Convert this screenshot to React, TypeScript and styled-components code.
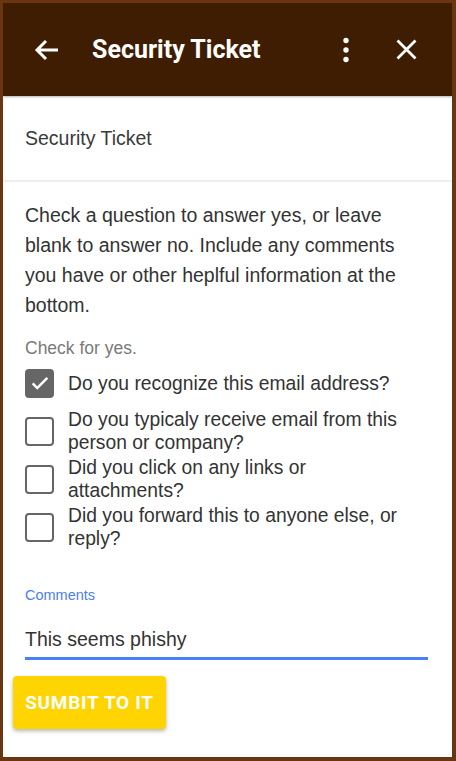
import React from "react";
import styled, { createGlobalStyle } from "styled-components";

const Global = createGlobalStyle`
  html, body { margin: 0; padding: 0; background: #6b3510; }
  body { font-family: "Liberation Sans", Arial, sans-serif; }
`;

const Frame = styled.div`
  width: 456px;
  height: 761px;
  box-sizing: border-box;
  border-style: solid;
  border-color: #6b3510;
  border-width: 3px 4px 4px 3px;
  display: flex;
  flex-direction: column;
  background: #fff;
  overflow: hidden;
`;

const Header = styled.header`
  height: 93px;
  flex: none;
  background: #3f1d02;
  display: flex;
  align-items: center;
  color: #fff;
  box-shadow: 0 1px 2px rgba(0,0,0,0.3);
`;

const IconBtn = styled.div<{ $w: number; $ml: number }>`
  width: ${(p) => p.$w}px;
  margin-left: ${(p) => p.$ml}px;
  display: flex;
  align-items: center;
  justify-content: center;
`;

const Title = styled.h1`
  margin: 0 0 0 32px;
  font-family: Roboto, "Liberation Sans", sans-serif;
  font-weight: 700;
  font-size: 25px;
  flex: 1;
`;

const SubHeader = styled.div`
  height: 84px;
  padding-left: 22px;
  display: flex;
  align-items: center;
  font-size: 19.5px;
  color: #3a3a3a;
  border-bottom: 2px solid #eeeeee;
  flex: none;
`;

const Body = styled.div`
  padding: 18px 24px 0 22px;
  display: flex;
  flex-direction: column;
`;

const Intro = styled.p`
  margin: 0;
  font-size: 19.5px;
  line-height: 30px;
  color: #333;
`;

const Hint = styled.div`
  margin-top: 18px;
  font-size: 17.5px;
  line-height: 21px;
  color: #7a7a7a;
`;

const List = styled.div`
  display: flex;
  flex-direction: column;
`;

const Row = styled.label`
  display: flex;
  align-items: center;
  height: 48px;
`;

const Box = styled.span<{ $on: boolean }>`
  width: 29px;
  height: 29px;
  box-sizing: border-box;
  border: 2px solid #666;
  border-radius: 4px;
  background: ${(p) => (p.$on ? "#666" : "#fff")};
  display: flex;
  align-items: center;
  justify-content: center;
  flex: none;
`;

const Question = styled.span`
  margin-left: 14px;
  font-size: 19.3px;
  line-height: 23px;
  color: #333;
  max-width: 345px;
`;

const Field = styled.div`
  margin-top: 36px;
  display: flex;
  flex-direction: column;
`;

const FieldLabel = styled.div`
  font-size: 14.5px;
  line-height: 17px;
  color: #4a80f5;
`;

const FieldValue = styled.div`
  margin-top: 23px;
  font-size: 19.5px;
  line-height: 24px;
  color: #333;
  padding-bottom: 6px;
  border-bottom: 3px solid #4a80f5;
`;

const Submit = styled.button`
  margin-top: 16px;
  margin-left: -12px;
  align-self: flex-start;
  width: 153px;
  height: 53px;
  border: none;
  border-radius: 4px;
  background: #ffd400;
  color: #fff;
  font-family: Roboto, "Liberation Sans", sans-serif;
  font-weight: 700;
  font-size: 19px;
  letter-spacing: 0.7px;
  box-shadow: 0 2px 4px rgba(0,0,0,0.3);
  padding: 0;
`;

const questions = [
  { text: "Do you recognize this email address?", on: true },
  { text: "Do you typicaly receive email from this person or company?", on: false },
  { text: "Did you click on any links or attachments?", on: false },
  { text: "Did you forward this to anyone else, or reply?", on: false },
];

export default function App() {
  return (
    <>
      <Global />
      <Frame>
        <Header>
          <IconBtn $w={26} $ml={31}>
            <svg width="26" height="24" viewBox="0 0 26 24">
              <path d="M24 12H4M12 3L3 12L12 21" stroke="#fff" strokeWidth="3" fill="none" />
            </svg>
          </IconBtn>
          <Title>Security Ticket</Title>
          <IconBtn $w={24} $ml={0}>
            <svg width="24" height="26" viewBox="0 0 24 26">
              <circle cx="12" cy="3.5" r="2.7" fill="#fff" />
              <circle cx="12" cy="13" r="2.7" fill="#fff" />
              <circle cx="12" cy="22.5" r="2.7" fill="#fff" />
            </svg>
          </IconBtn>
          <IconBtn $w={24} $ml={36}>
            <svg width="21" height="21" viewBox="0 0 21 21">
              <path d="M1.5 1.5L19.5 19.5M19.5 1.5L1.5 19.5" stroke="#fff" strokeWidth="2.8" />
            </svg>
          </IconBtn>
          <IconBtn $w={34} $ml={0} />
        </Header>
        <SubHeader>Security Ticket</SubHeader>
        <Body>
          <Intro>
            Check a question to answer yes, or leave blank to answer no. Include any comments you have or other heplful information at the bottom.
          </Intro>
          <Hint>Check for yes.</Hint>
          <List>
            {questions.map((q, i) => (
              <Row key={i}>
                <Box $on={q.on}>
                  {q.on && (
                    <svg width="22" height="22" viewBox="0 0 24 24">
                      <path d="M4 12.5l5 5L20 6.5" stroke="#fff" strokeWidth="2.8" fill="none" />
                    </svg>
                  )}
                </Box>
                <Question>{q.text}</Question>
              </Row>
            ))}
          </List>
          <Field>
            <FieldLabel>Comments</FieldLabel>
            <FieldValue>This seems phishy</FieldValue>
          </Field>
          <Submit>SUMBIT TO IT</Submit>
        </Body>
      </Frame>
    </>
  );
}
